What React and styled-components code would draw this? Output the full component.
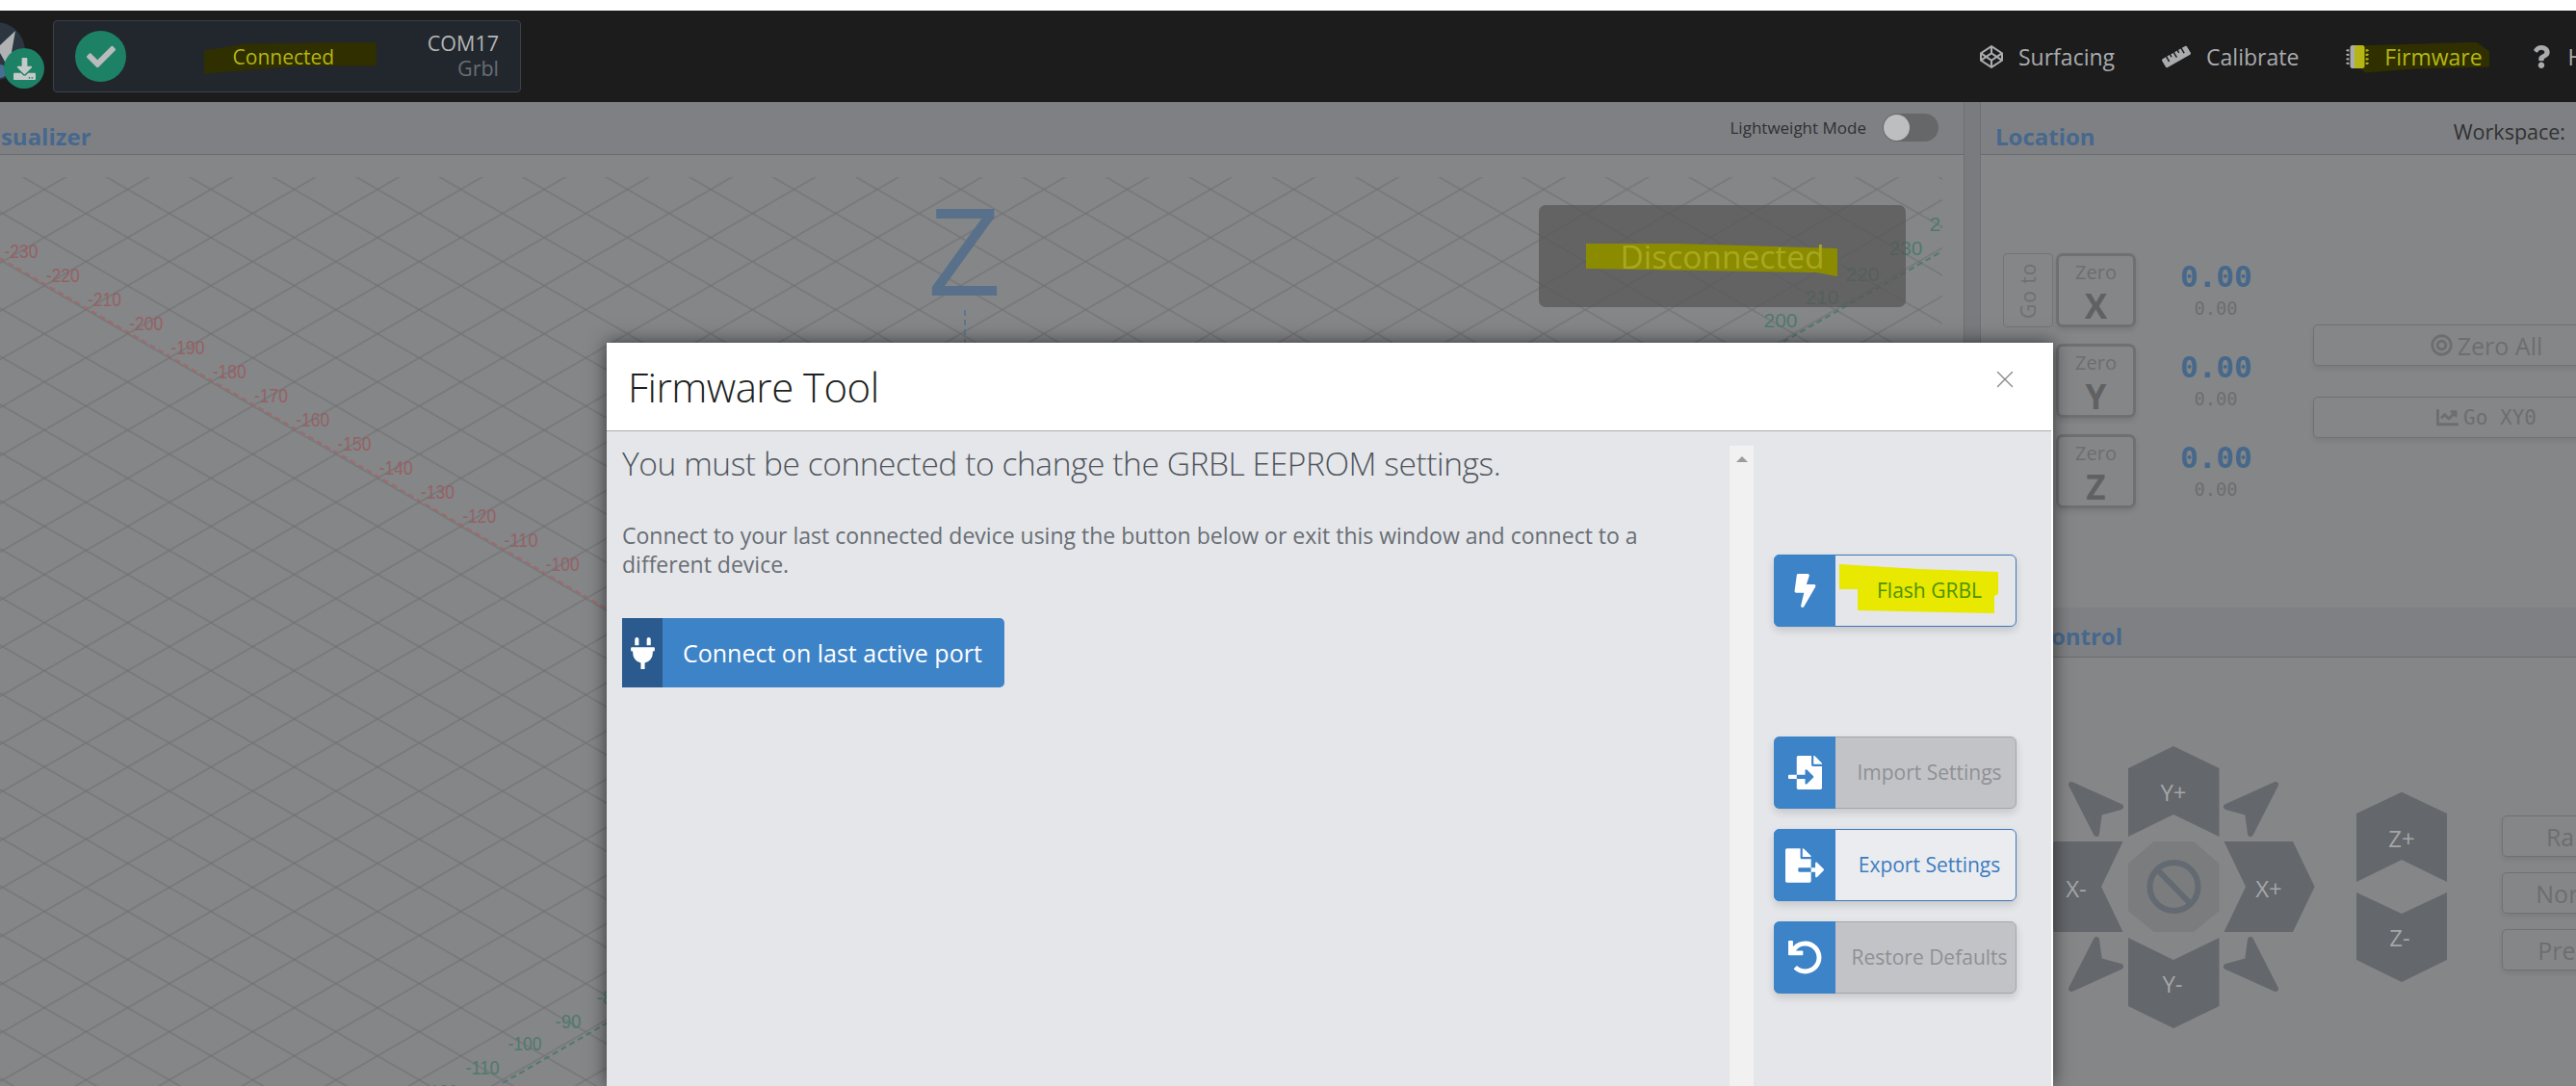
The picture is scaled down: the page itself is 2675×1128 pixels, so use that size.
import React from 'react';
import styled, { createGlobalStyle } from 'styled-components';
import {
  FaBolt,
  FaBullseye,
  FaChartLine,
  FaCheck,
  FaCodepen,
  FaDownload,
  FaFileExport,
  FaFileImport,
  FaMicrochip,
  FaPlug,
  FaQuestion,
  FaRuler,
  FaUndo,
} from 'react-icons/fa';
import { X } from 'lucide-react';

const GlobalStyle = createGlobalStyle`
  html, body {
    margin: 0;
    padding: 0;
    background: #ffffff;
    font-family: "Open Sans", "Liberation Sans", sans-serif;
  }
  * {
    box-sizing: border-box;
  }
`;

const Page = styled.div`
  position: relative;
  width: 2675px;
  height: 1128px;
  padding-top: 11px;
  overflow: hidden;
  background: #ffffff;
`;

/* top bar */
const Header = styled.header`
  display: flex;
  align-items: center;
  height: 95px;
  background: #1c1c1d;
  color: #a9abad;
`;

const LogoWrap = styled.div`
  position: relative;
  flex: none;
  width: 55px;
  height: 95px;
`;

const DownloadBadge = styled.div`
  position: absolute;
  left: 4px;
  top: 39px;
  width: 42px;
  height: 42px;
  border-radius: 50%;
  background: #1c8165;
  color: #c5c9c8;
  display: flex;
  align-items: center;
  justify-content: center;
  font-size: 23px;
`;

const StatusBox = styled.div`
  flex: none;
  display: flex;
  align-items: center;
  width: 486px;
  height: 75px;
  padding: 0 22px;
  background: #22272e;
  border: 1px solid #3a4149;
  border-radius: 4px;
`;

const StatusCircle = styled.div`
  flex: none;
  width: 53px;
  height: 53px;
  border-radius: 50%;
  background: #1c8165;
  color: #b9bbbc;
  display: flex;
  align-items: center;
  justify-content: center;
  font-size: 30px;
`;

const StatusText = styled.div`
  position: relative;
  flex: 1;
  padding-left: 14px;
  text-align: center;
  font-size: 21px;
  line-height: 30px;
  color: #b5b515;
`;

const Marked = styled.span`
  position: relative;
  z-index: 1;
`;

const Highlight = styled.span`
  position: absolute;
  left: ${(p) => p.$left}px;
  top: ${(p) => p.$top}px;
  width: ${(p) => p.$w}px;
  height: ${(p) => p.$h}px;
  background: ${(p) => p.$color};
  clip-path: polygon(${(p) => p.$shape});
`;

const PortInfo = styled.div`
  flex: none;
  margin-top: -2px;
  text-align: right;
  font-size: 21.5px;
  line-height: 26px;
  color: #b3b5b6;
`;

const Firmware = styled.div`
  color: #666e73;
`;

const Nav = styled.nav`
  flex: none;
  display: flex;
  align-items: center;
  gap: 49px;
  margin-left: 1515px;
  white-space: nowrap;
`;

const NavItem = styled.div`
  position: relative;
  display: flex;
  align-items: center;
  gap: 16px;
  font-size: 23px;
  line-height: 30px;
  color: ${(p) => (p.$marked ? '#b5b515' : '#a9abad')};
`;

const NavIcon = styled.span`
  position: relative;
  z-index: 1;
  display: flex;
  font-size: ${(p) => p.$size || 24}px;
  color: #a9abad;
`;

const ChipIcon = styled(FaMicrochip)`
  fill: url(#chipFill);
`;

/* panels behind the dialog */
const Main = styled.main`
  display: flex;
  width: 2812px;
  height: 1022px;
  margin-left: -37px;
  background: #797b7e;
`;

const VisualizerPanel = styled.section`
  flex: none;
  width: 2077px;
  background: #858688;
  border-right: 1px solid #6e7073;
`;

const PanelHeader = styled.div`
  display: flex;
  align-items: center;
  justify-content: space-between;
  height: ${(p) => p.$h || 55}px;
  padding: 0 ${(p) => p.$right || 15}px 0 15px;
  background: #7f8083;
  border-bottom: 1px solid #6a6c70;
`;

const PanelTitle = styled.h2`
  align-self: flex-end;
  margin: 0 0 ${(p) => p.$lift || 2}px;
  font-size: 24px;
  line-height: 32px;
  font-weight: 700;
  color: #46688e;
`;

const LightweightRow = styled.div`
  display: flex;
  align-items: center;
  gap: 17px;
  margin-top: -2px;
  font-size: 17px;
  color: #2e3033;
`;

const Toggle = styled.div`
  width: 58px;
  height: 29px;
  padding: 1px;
  border-radius: 15px;
  background: #666769;
`;

const ToggleKnob = styled.div`
  width: 27px;
  height: 27px;
  border-radius: 50%;
  background: #bdbec0;
`;

const CanvasArea = styled.div`
  position: relative;
  padding-top: 23px;
`;

const GridSvg = styled.svg`
  display: block;
`;

const DisconnectedBox = styled.div`
  position: absolute;
  right: 60px;
  top: 52px;
  width: 381px;
  height: 106px;
  display: flex;
  align-items: center;
  justify-content: center;
  border-radius: 7px;
  background: rgba(86, 86, 86, 0.72);
  font-size: 33.5px;
  color: #a8a820;
`;

const RightColumn = styled.div`
  flex: none;
  width: 719px;
  margin-left: 16px;
  background: #858688;
  border-left: 1px solid #6e7073;
`;

const LocationSection = styled.section`
  height: 525px;
`;

const WorkspaceLabel = styled.span`
  margin-right: 96px;
  margin-top: 7px;
  font-size: 21.5px;
  color: #303234;
`;

const LocationBody = styled.div`
  display: flex;
  padding: 102px 0 0 23px;
`;

const AxisGrid = styled.div`
  display: grid;
  grid-template-columns: 52px 83px 117px;
  grid-auto-rows: 77px;
  column-gap: 3px;
  row-gap: 17px;
`;

const GoToButton = styled.div`
  grid-column: 1;
  grid-row: 1;
  display: flex;
  align-items: center;
  justify-content: center;
  border: 1px solid #727477;
  border-radius: 4px;
  writing-mode: vertical-rl;
  transform: rotate(180deg);
  font-size: 21px;
  letter-spacing: 1px;
  color: #6e7073;
`;

const ZeroButton = styled.div`
  grid-column: 2;
  grid-row: ${(p) => p.$row};
  display: flex;
  flex-direction: column;
  align-items: center;
  padding-top: 4px;
  border: 3px solid #6e7073;
  border-radius: 7px;
  box-shadow: 0 3px 5px rgba(0, 0, 0, 0.1);
  color: #6c6e70;
`;

const ZeroLabel = styled.span`
  margin-bottom: 3px;
  font-size: 20px;
  line-height: 26px;
`;

const AxisLetter = styled.span`
  font-size: 35px;
  line-height: 38px;
  font-weight: 700;
  color: #5f6163;
`;

const Readout = styled.div`
  grid-column: 3;
  grid-row: ${(p) => p.$row};
  padding: 4px 0 0 43px;
  font-family: "DejaVu Sans Mono", "Liberation Mono", monospace;
`;

const MainValue = styled.div`
  width: 74px;
  font-size: 31px;
  line-height: 40px;
  font-weight: 700;
  color: #46688a;
`;

const SubValue = styled.div`
  width: 74px;
  text-align: center;
  font-size: 18.7px;
  line-height: 28px;
  color: #6c6e70;
`;

const ActionColumn = styled.div`
  display: flex;
  flex-direction: column;
  gap: 32px;
  margin-left: 64px;
  padding-top: 74px;
`;

const GhostButton = styled.div`
  display: flex;
  align-items: center;
  justify-content: center;
  gap: 5px;
  width: ${(p) => p.$w}px;
  height: 43px;
  border: 1px solid #6f7174;
  border-radius: 5px;
  box-shadow: 0 3px 5px rgba(0, 0, 0, 0.08);
  font-size: 25px;
  color: #6c6e70;

  svg {
    font-size: 23px;
  }
`;

const MonoText = styled.span`
  font-family: "DejaVu Sans Mono", "Liberation Mono", monospace;
  font-size: 21px;
`;

const JogBody = styled.div`
  display: flex;
  align-items: flex-start;
  padding-top: 77px;
`;

const JogSvg = styled.svg`
  flex: none;
  display: block;
`;

const SpeedColumn = styled.div`
  display: flex;
  flex-direction: column;
  gap: 16px;
  margin: 87px 0 0 52px;
`;

/* firmware dialog */
const Modal = styled.div`
  position: absolute;
  left: 630px;
  top: 356px;
  display: flex;
  flex-direction: column;
  width: 1502px;
  height: 772px;
  border: solid #ffffff;
  border-width: 1px 2px 0 0;
  background: #e4e6ea;
  box-shadow: 0 0 18px rgba(0, 0, 0, 0.6);
`;

const ModalHeader = styled.div`
  display: flex;
  align-items: center;
  justify-content: space-between;
  flex: none;
  height: 91px;
  padding: 0 33px 0 22px;
  background: #ffffff;
  border-bottom: 1px solid #a9abae;
`;

const ModalTitle = styled.h1`
  margin: 0;
  font-size: 42px;
  font-weight: 300;
  letter-spacing: -0.55px;
  line-height: 56px;
  color: #1d1f21;
`;

const CloseButton = styled.div`
  display: flex;
  margin-top: -16px;
  color: #86888a;
`;

const ModalBody = styled.div`
  display: flex;
  flex: 1;
  min-height: 0;
`;

const MessageColumn = styled.div`
  flex: none;
  width: 1166px;
  padding: 13px 0 0 16px;
`;

const MessageTitle = styled.h3`
  margin: 0;
  font-size: 33.5px;
  letter-spacing: -0.42px;
  line-height: 40px;
  font-weight: 300;
  color: #50555c;
`;

const MessageText = styled.p`
  width: 1100px;
  margin: 40px 0 0;
  font-size: 23px;
  line-height: 30px;
  color: #696e74;
`;

const ConnectButton = styled.div`
  display: flex;
  align-items: stretch;
  width: 397px;
  height: 72px;
  margin-top: 41px;
  border-radius: 0 5px 5px 0;
  overflow: hidden;
  background: #3d83c8;
  color: #ffffff;
`;

const ConnectIcon = styled.div`
  display: flex;
  align-items: center;
  justify-content: center;
  flex: none;
  width: 42px;
  background: #2a5a8e;
  font-size: 33px;
`;

const ConnectLabel = styled.div`
  display: flex;
  align-items: center;
  padding-left: 21px;
  font-size: 25px;
  font-weight: 500;
`;

const ScrollTrack = styled.div`
  flex: none;
  width: 25px;
  margin-top: 15px;
  padding-top: 11px;
  background: #f1f1f1;
`;

const ScrollArrow = styled.div`
  width: 0;
  height: 0;
  margin: 0 auto;
  border: solid transparent;
  border-width: 0 6px 6px;
  border-bottom-color: #9c9c9c;
`;

const SideColumn = styled.div`
  flex: none;
  width: 252px;
  margin-left: 21px;
  padding-top: 128px;
`;

const SideButton = styled.div`
  position: relative;
  display: flex;
  align-items: stretch;
  height: 75px;
  margin-top: ${(p) => p.$top || 0}px;
  border: 1px solid ${(p) => (p.$disabled ? '#a4a6aa' : '#3d78b5')};
  border-radius: 6px;
  background: ${(p) => (p.$disabled ? '#c2c3c7' : p.$light ? '#eaecf0' : '#e4e6ea')};
  box-shadow: 0 4px 8px rgba(0, 0, 0, 0.14);
`;

const SideIcon = styled.div`
  flex: none;
  display: flex;
  align-items: center;
  justify-content: center;
  width: 64px;
  margin: -1px 0 -1px -1px;
  border-radius: 6px 0 0 6px;
  background: #3d83c8;
  color: #ffffff;
  font-size: ${(p) => p.$size || 35}px;
`;

const SideLabel = styled.div`
  position: relative;
  flex: 1;
  display: flex;
  align-items: center;
  justify-content: center;
  padding: 0 0 2px 8px;
  white-space: nowrap;
  font-size: 21px;
  color: ${(p) => p.$color};
`;

const RED = Array.from({ length: 14 }, (_, i) => ({
  label: `-${230 - i * 10}`,
  x: 22 + 43.25 * i,
  y: 261 + 25 * i,
}));

const GREEN = [
  { label: '-80', x: 633, y: 1036 },
  { label: '-90', x: 590, y: 1061 },
  { label: '-100', x: 545, y: 1084 },
  { label: '-110', x: 501, y: 1109 },
  { label: '-120', x: 458, y: 1134 },
  { label: '200', x: 1849, y: 333 },
  { label: '210', x: 1892, y: 309 },
  { label: '220', x: 1934, y: 285 },
  { label: '230', x: 1979, y: 258 },
  { label: '240', x: 2021, y: 233 },
];

const axisWidth = (label) => (label.length === 3 && label[0] === '-' ? 27 : 35);

const CanvasDrawing = () => (
  <GridSvg width="2054" height="944" viewBox="-37 184 2054 944">
    <defs>
      <pattern
        id="isoGrid"
        width="86.5"
        height="50"
        patternUnits="userSpaceOnUse"
        patternTransform="translate(46.1 196.7)"
      >
        <path d="M0 0L86.5 50M86.5 0L0 50" stroke="#707274" strokeWidth="1.2" fill="none" />
      </pattern>
    </defs>
    <rect x="-37" y="184" width="2054" height="944" fill="url(#isoGrid)" />
    <path d="M0 268L640 638" stroke="#a06a6c" strokeWidth="2" strokeDasharray="6 4" />
    <path d="M522 1125L640 1057" stroke="#4f7a6d" strokeWidth="2" strokeDasharray="6 4" />
    <path d="M1852 355L2015 262" stroke="#4f7a6d" strokeWidth="2" strokeDasharray="6 4" />
    <path d="M1002 322V356" stroke="#5d7690" strokeWidth="2" strokeDasharray="6 4" />
    {RED.map((t) => (
      <text
        key={t.label}
        x={t.x}
        y={t.y + 7}
        textAnchor="middle"
        fontFamily="Liberation Sans"
        fontSize="20"
        fill="#946265"
        textLength="35"
        lengthAdjust="spacingAndGlyphs"
      >
        {t.label}
      </text>
    ))}
    {GREEN.map((t) => (
      <text
        key={t.label}
        x={t.x}
        y={t.y + 7}
        textAnchor="middle"
        fontFamily="Liberation Sans"
        fontSize="20"
        fill="#4f7a6d"
        textLength={axisWidth(t.label)}
        lengthAdjust="spacingAndGlyphs"
      >
        {t.label}
      </text>
    ))}
    <text
      x="1001.5"
      y="307"
      textAnchor="middle"
      fontFamily="Liberation Sans"
      fontSize="130"
      fill="#587089"
      textLength="75"
      lengthAdjust="spacingAndGlyphs"
    >
      Z
    </text>
  </GridSvg>
);

const HEX = '#64676c';

const corner = 'M2150 815L2201 838L2179 844L2176 866Z';

const JogLabel = ({ x, y, children }) => (
  <text
    x={x}
    y={y + 9}
    textAnchor="middle"
    fontFamily="Open Sans"
    fontSize="24"
    fill="#a4a6a8"
  >
    {children}
  </text>
);

const JogPad = () => (
  <JogSvg width="489" height="315" viewBox="2056 760 489 315">
    <g fill={HEX}>
      <path d="M2209 798L2256 775L2303.5 798V869L2256 846L2209 869Z" />
      <path d="M2209 974L2256 997L2303.5 974V1045L2256 1068L2209 1045Z" />
      <path d="M2308.5 874H2380L2402.6 921L2380 968H2308.5L2331 921Z" />
      <path d="M2203.5 874H2132L2109 921L2132 968H2203.5L2181 921Z" />
      <path d="M2446 845L2493 822.7L2540 845V916L2493 893L2446 916Z" />
      <path d="M2446 927L2493 949L2540 927V997L2493 1020L2446 997Z" />
    </g>
    <g fill={HEX} stroke={HEX} strokeWidth="6" strokeLinejoin="round">
      <path d={corner} />
      <path d={corner} transform="matrix(-1 0 0 1 4512 0)" />
      <path d={corner} transform="matrix(1 0 0 -1 0 1842)" />
      <path d={corner} transform="matrix(-1 0 0 -1 4512 1842)" />
    </g>
    <path
      d="M2235.6 874H2277L2303.5 897V946L2277 968H2235.6L2209 946V897Z"
      fill="#7b7c7e"
    />
    <ellipse cx="2256.5" cy="921" rx="25" ry="25" fill="none" stroke="#636a72" strokeWidth="6" />
    <path d="M2239 903L2274 939" stroke="#636a72" strokeWidth="6" />
    <JogLabel x={2256} y={823}>Y+</JogLabel>
    <JogLabel x={2155} y={923}>X-</JogLabel>
    <JogLabel x={2355} y={923}>X+</JogLabel>
    <JogLabel x={2255} y={1022}>Y-</JogLabel>
    <JogLabel x={2493} y={871}>Z+</JogLabel>
    <JogLabel x={2491} y={974}>Z-</JogLabel>
  </JogSvg>
);

const RocketLogo = () => (
  <svg width="46" height="80" viewBox="0 0 46 80" style={{ display: 'block' }}>
    <circle cx="-4" cy="42" r="30" fill="#2b3640" />
    <path d="M16 21L9 60L0 44V36Z" fill="#b0b2b3" />
    <circle cx="0" cy="63" r="7" fill="#4a6d94" />
  </svg>
);

const axes = [
  { letter: 'X', row: 1 },
  { letter: 'Y', row: 2 },
  { letter: 'Z', row: 3 },
];

const App = () => {
  return (
    <Page>
      <GlobalStyle />
      <svg width="0" height="0" style={{ position: 'absolute' }}>
        <defs>
          <linearGradient id="chipFill" x1="0" x2="1" y1="0" y2="0">
            <stop offset="0.36" stopColor="#a9abad" />
            <stop offset="0.36" stopColor="#b5b515" />
          </linearGradient>
        </defs>
      </svg>
      <Header>
        <LogoWrap>
          <RocketLogo />
          <DownloadBadge>
            <FaDownload />
          </DownloadBadge>
        </LogoWrap>
        <StatusBox>
          <StatusCircle>
            <FaCheck />
          </StatusCircle>
          <StatusText>
            <Highlight
              $left={81}
              $top={0}
              $w={179}
              $h={33}
              $color="#2f2f00"
              $shape="0 9px, 43px 2px, 179px 0, 179px 25px, 100px 25px, 12px 32px, 0 33px"
            />
            <Marked>Connected</Marked>
          </StatusText>
          <PortInfo>
            COM17
            <Firmware>Grbl</Firmware>
          </PortInfo>
        </StatusBox>
        <Nav>
          <NavItem>
            <NavIcon>
              <FaCodepen />
            </NavIcon>
            Surfacing
          </NavItem>
          <NavItem>
            <NavIcon $size={30}>
              <FaRuler />
            </NavIcon>
            Calibrate
          </NavItem>
          <NavItem $marked>
            <Highlight
              $left={10}
              $top={0}
              $w={139}
              $h={32}
              $color="#2f2f00"
              $shape="0 4px, 70px 2px, 125px 0, 139px 10px, 139px 26px, 60px 28px, 10px 32px, 0 24px"
            />
            <NavIcon>
              <ChipIcon />
            </NavIcon>
            <Marked>Firmware</Marked>
          </NavItem>
          <NavItem>
            <NavIcon>
              <FaQuestion />
            </NavIcon>
            Help
          </NavItem>
        </Nav>
      </Header>
      <Main>
        <VisualizerPanel>
          <PanelHeader $right={26}>
            <PanelTitle>Visualizer</PanelTitle>
            <LightweightRow>
              Lightweight Mode
              <Toggle>
                <ToggleKnob />
              </Toggle>
            </LightweightRow>
          </PanelHeader>
          <CanvasArea>
            <CanvasDrawing />
            <DisconnectedBox>
              <Highlight
                $left={49}
                $top={40}
                $w={261}
                $h={34}
                $color="#8b8b00"
                $shape="0 0, 94px 0, 261px 5px, 261px 34px, 239px 30px, 0 26px"
              />
              <Marked>Disconnected</Marked>
            </DisconnectedBox>
          </CanvasArea>
        </VisualizerPanel>
        <RightColumn>
          <LocationSection>
            <PanelHeader>
              <PanelTitle>Location</PanelTitle>
              <WorkspaceLabel>Workspace:</WorkspaceLabel>
            </PanelHeader>
            <LocationBody>
              <AxisGrid>
                <GoToButton>Go to</GoToButton>
                {axes.map((a) => (
                  <React.Fragment key={a.letter}>
                    <ZeroButton $row={a.row}>
                      <ZeroLabel>Zero</ZeroLabel>
                      <AxisLetter>{a.letter}</AxisLetter>
                    </ZeroButton>
                    <Readout $row={a.row}>
                      <MainValue>0.00</MainValue>
                      <SubValue>0.00</SubValue>
                    </Readout>
                  </React.Fragment>
                ))}
              </AxisGrid>
              <ActionColumn>
                <GhostButton $w={360}>
                  <FaBullseye />
                  Zero All
                </GhostButton>
                <GhostButton $w={360}>
                  <FaChartLine />
                  <MonoText>Go XY0</MonoText>
                </GhostButton>
              </ActionColumn>
            </LocationBody>
          </LocationSection>
          <section>
            <PanelHeader $h={52}>
              <PanelTitle $lift={5}>Jog Control</PanelTitle>
            </PanelHeader>
            <JogBody>
              <JogPad />
              <SpeedColumn>
                <GhostButton $w={158}>Rapid</GhostButton>
                <GhostButton $w={158}>Normal</GhostButton>
                <GhostButton $w={158}>Precise</GhostButton>
              </SpeedColumn>
            </JogBody>
          </section>
        </RightColumn>
      </Main>
      <Modal>
        <ModalHeader>
          <ModalTitle>Firmware Tool</ModalTitle>
          <CloseButton>
            <X size={30} strokeWidth={1.1} />
          </CloseButton>
        </ModalHeader>
        <ModalBody>
          <MessageColumn>
            <MessageTitle>You must be connected to change the GRBL EEPROM settings.</MessageTitle>
            <MessageText>
              Connect to your last connected device using the button below or exit this window and
              connect to a different device.
            </MessageText>
            <ConnectButton>
              <ConnectIcon>
                <FaPlug />
              </ConnectIcon>
              <ConnectLabel>Connect on last active port</ConnectLabel>
            </ConnectButton>
          </MessageColumn>
          <ScrollTrack>
            <ScrollArrow />
          </ScrollTrack>
          <SideColumn>
            <SideButton>
              <SideIcon>
                <FaBolt />
              </SideIcon>
              <SideLabel $color="#4f9200">
                <Highlight
                  $left={4}
                  $top={9}
                  $w={165}
                  $h={51}
                  $color="#e8e800"
                  $shape="0 0, 83px 5px, 165px 8px, 165px 31px, 161px 33px, 161px 51px, 19px 48px, 19px 26px, 0 26px"
                />
                <Marked>Flash GRBL</Marked>
              </SideLabel>
            </SideButton>
            <SideButton $top={114} $disabled>
              <SideIcon>
                <FaFileImport />
              </SideIcon>
              <SideLabel $color="#8f9094">Import Settings</SideLabel>
            </SideButton>
            <SideButton $top={21} $light>
              <SideIcon $size={40}>
                <FaFileExport />
              </SideIcon>
              <SideLabel $color="#3d7cc0">Export Settings</SideLabel>
            </SideButton>
            <SideButton $top={21} $disabled>
              <SideIcon>
                <FaUndo />
              </SideIcon>
              <SideLabel $color="#8f9094">Restore Defaults</SideLabel>
            </SideButton>
          </SideColumn>
        </ModalBody>
      </Modal>
    </Page>
  );
};

export default App;
